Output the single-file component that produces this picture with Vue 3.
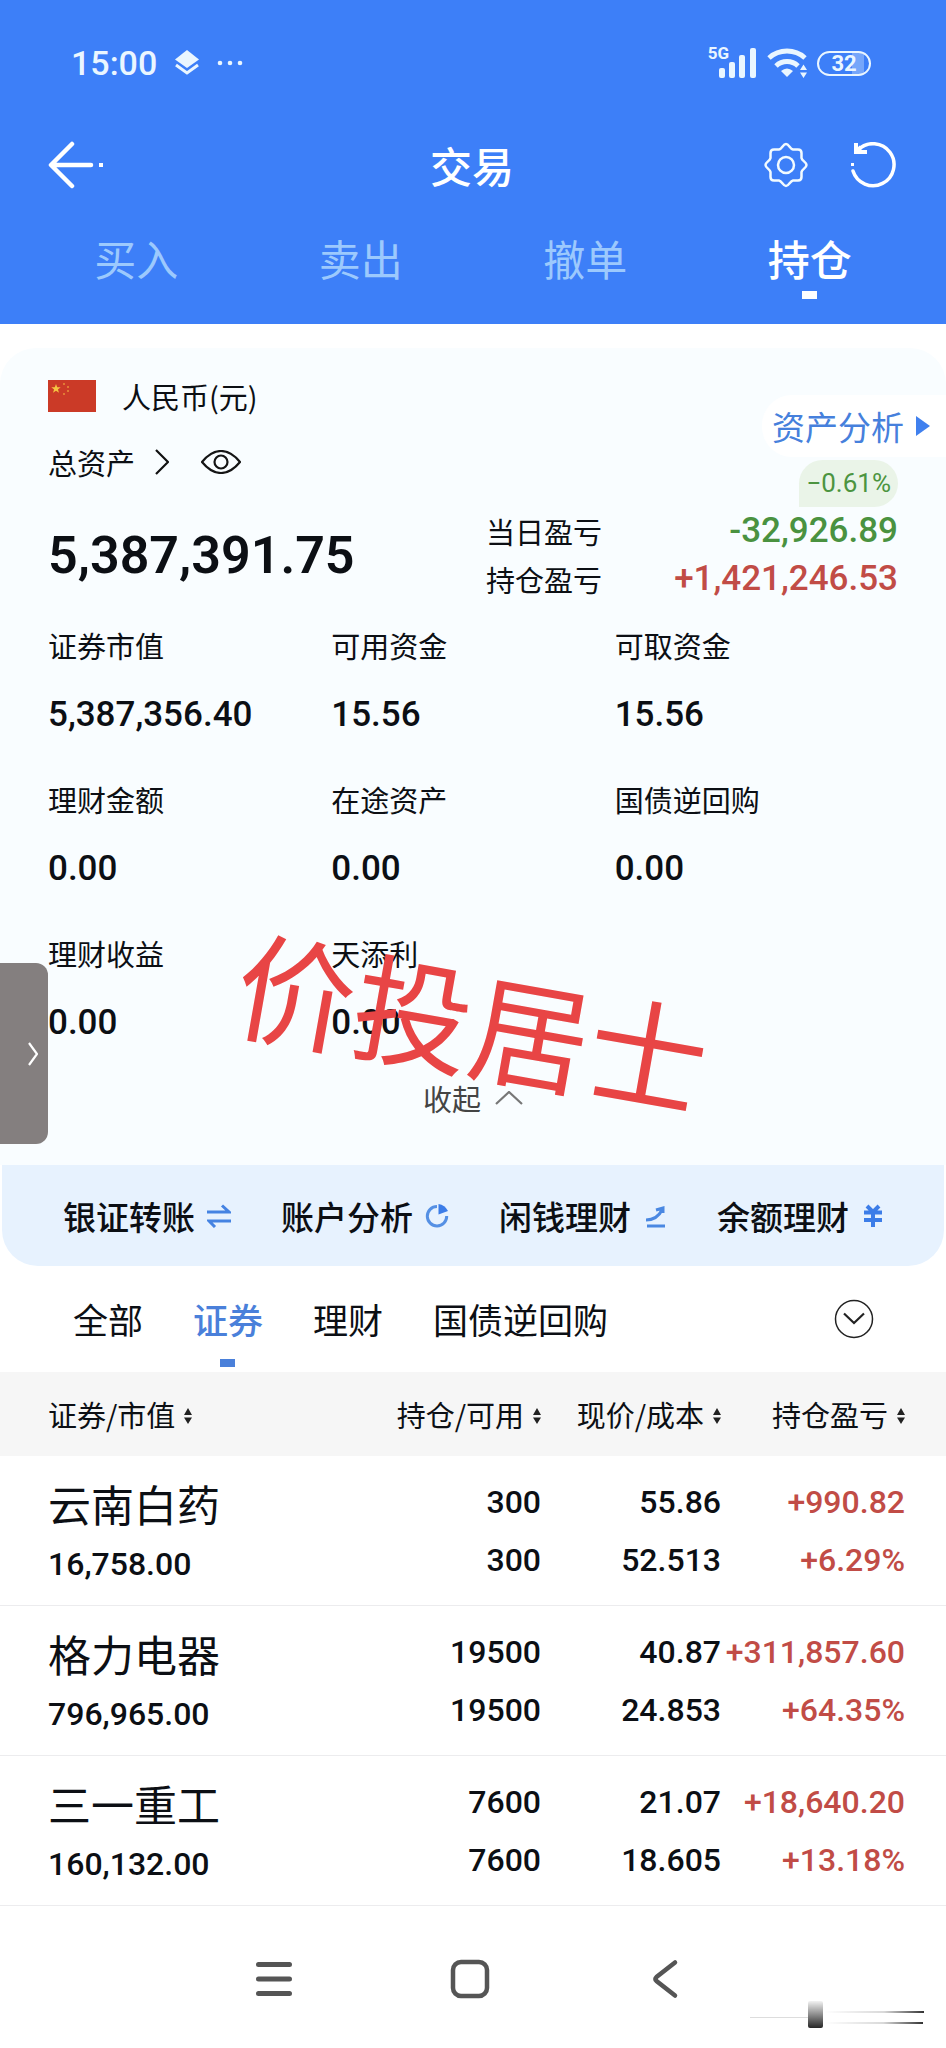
<template>
  <div class="page">
    <header class="header">
      <div class="status-bar">
        <div class="status-left">
          <span class="clock">15:00</span>
          <svg class="layers-icon" viewBox="0 0 24 26">
            <path d="M12 0 L24 9.5 L12 18 L0 9.5 Z" fill="#eaf6ff" />
            <path d="M1 15 L12 23 L23 15" fill="none" stroke="#eaf6ff" stroke-width="3" />
          </svg>
          <svg class="dots-icon" viewBox="0 0 26 6">
            <circle cx="3" cy="3" r="2.3" fill="#eaf6ff" />
            <circle cx="13" cy="3" r="2.3" fill="#eaf6ff" />
            <circle cx="23" cy="3" r="2.3" fill="#eaf6ff" />
          </svg>
        </div>
        <div class="status-right">
          <span class="network">5G</span>
          <svg class="signal-icon" viewBox="0 0 38 30" fill="#eaf6ff">
            <rect x="0" y="20" width="6" height="10" rx="2" />
            <rect x="10" y="14" width="6" height="16" rx="2" />
            <rect x="20" y="7" width="6" height="23" rx="2" />
            <rect x="31" y="0" width="6" height="30" rx="2" />
          </svg>
          <svg class="wifi-icon" viewBox="0 0 42 30">
            <g fill="none" stroke="#eaf6ff" stroke-width="5">
              <path d="M2 10 A27 27 0 0 1 38 10" />
              <path d="M9 18 A16 16 0 0 1 31 18" />
            </g>
            <path d="M14 23 Q20 18 26 23 L20 29 Z" fill="#eaf6ff" />
            <path d="M33 22 L36.500 16.500 L40 22 Z M33 24.500 L36.500 30 L40 24.500 Z" fill="#eaf6ff" />
          </svg>
          <span class="battery">32</span>
        </div>
      </div>

      <div class="nav-bar">
        <button class="icon-btn back" aria-label="返回">
          <svg width="56" height="48" viewBox="0 0 56 48">
            <path d="M24 3 L3 24 L24 45 M4 24 H43" fill="none" stroke="#fff" stroke-width="4.500" stroke-linecap="round" stroke-linejoin="round" />
            <rect x="51" y="22" width="4" height="4" fill="#fff" />
          </svg>
        </button>
        <h1 class="title">交易</h1>
        <div class="nav-actions">
          <button class="icon-btn" aria-label="设置">
            <svg width="44" height="46" viewBox="0 0 44 46" fill="none" stroke="#f2fbff" stroke-width="2.500" stroke-linejoin="round">
              <path d="M22 2 C25 2 26 7 29 7.500 H34 Q37.500 7.500 37.500 11 V16 C38 19 42.500 20 42.500 23 C42.500 26 38 27 37.500 30 V35 Q37.500 38.500 34 38.500 H29 C26 39 25 44 22 44 C19 44 18 39 15 38.500 H10 Q6.500 38.500 6.500 35 V30 C6 27 1.500 26 1.500 23 C1.500 20 6 19 6.500 16 V11 Q6.500 7.500 10 7.500 H15 C18 7 19 2 22 2 Z" />
              <circle cx="22" cy="23" r="8" />
            </svg>
          </button>
          <button class="icon-btn" aria-label="刷新">
            <svg width="46" height="46" viewBox="0 0 46 46" fill="none" stroke="#fff" stroke-width="3.500">
              <path d="M8 8 A21 21 0 1 1 3 29" stroke-linecap="round" />
              <path d="M6 1 V10 H17 M6 10 L11 5" stroke-width="4" />
              <rect x="1" y="21" width="3" height="3" fill="#fff" stroke="none" />
            </svg>
          </button>
        </div>
      </div>

      <nav class="main-tabs">
        <button
          v-for="tab in mainTabs"
          :key="tab"
          class="main-tab"
          :class="{ active: tab === activeMain }"
          @click="activeMain = tab"
        >{{ tab }}</button>
      </nav>
    </header>

    <section class="panel">
      <div class="currency">
        <svg class="flag" viewBox="0 0 48 32">
          <rect width="48" height="32" fill="#cb3a27" />
          <path d="M8 4 L9.200 7.300 L12.700 7.300 L9.900 9.400 L11 12.800 L8 10.700 L5 12.800 L6.100 9.400 L3.300 7.300 L6.800 7.300 Z" fill="#f5c542" />
          <g fill="#e8913a">
            <circle cx="16" cy="4" r="1" />
            <circle cx="20" cy="7" r="1" />
            <circle cx="20" cy="11" r="1" />
            <circle cx="16" cy="14" r="1" />
          </g>
        </svg>
        <span>人民币(元)</span>
      </div>

      <a class="analysis" href="#">
        资产分析
        <svg width="14" height="20" viewBox="0 0 14 20"><path d="M0 0 L14 10 L0 20 Z" fill="#4080ee" /></svg>
      </a>

      <div class="overview">
        <div class="total">
          <div class="total-label">
            <span>总资产</span>
            <svg class="chevron" viewBox="0 0 14 26"><path d="M1 1 L13 13 L1 25" fill="none" stroke="#111" stroke-width="2.200" /></svg>
            <button class="icon-btn" aria-label="显示资产">
              <svg width="40" height="24" viewBox="0 0 40 24" fill="none" stroke="#151515" stroke-width="2.200">
                <path d="M1 12 Q10 1 20 1 Q30 1 39 12 Q30 23 20 23 Q10 23 1 12 Z" />
                <circle cx="20" cy="12" r="6.500" />
              </svg>
            </button>
          </div>
          <div class="total-value num">5,387,391.75</div>
        </div>
        <div class="profit">
          <span class="badge">−0.61%</span>
          <div class="profit-row">
            <span>当日盈亏</span>
            <span class="num green">-32,926.89</span>
          </div>
          <div class="profit-row">
            <span>持仓盈亏</span>
            <span class="num red">+1,421,246.53</span>
          </div>
        </div>
      </div>

      <dl class="stats">
        <div v-for="item in stats" :key="item.label" class="stat">
          <dt>{{ item.label }}</dt>
          <dd class="num">{{ item.value }}</dd>
        </div>
      </dl>

      <button class="collapse">
        收起
        <svg width="28" height="14" viewBox="0 0 28 14"><path d="M1 13 L14 1 L27 13" fill="none" stroke="#777" stroke-width="2.200" /></svg>
      </button>

      <button class="drawer" aria-label="展开">
        <svg width="10" height="24" viewBox="0 0 10 24"><path d="M1 1 L9 12 L1 23" fill="none" stroke="#fff" stroke-width="2.200" /></svg>
      </button>
      <div class="signature">价投居士</div>
    </section>

    <nav class="shortcuts">
      <a href="#">银证转账
        <svg width="24" height="24" viewBox="0 0 24 24" fill="none" stroke="#4583e2" stroke-width="3">
          <path d="M0 8 H22 L15 1.500 M24 17 H2 L8 23" />
        </svg>
      </a>
      <a href="#">账户分析
        <svg width="24" height="24" viewBox="0 0 24 24">
          <path d="M12 2.500 A9.700 9.700 0 1 0 21.700 12" fill="none" stroke="#5590e4" stroke-width="3" />
          <path d="M13.500 10.500 V0 Q20 1 23 7 Z" fill="#3c7de8" />
        </svg>
      </a>
      <a href="#">闲钱理财
        <svg width="24" height="24" viewBox="0 0 24 24" fill="none" stroke="#4a88e2" stroke-width="3">
          <path d="M3 16 Q14 16 19 6 M13 6 L20 4 L20 9 M4 22 H22" />
        </svg>
      </a>
      <a href="#">余额理财
        <svg width="24" height="24" viewBox="0 0 24 24" fill="none" stroke="#3c7de8" stroke-width="4">
          <path d="M6 2 L12 8 L18 2 M3 8.500 H21 M3 16 H21 M12 8 V23" />
        </svg>
      </a>
    </nav>

    <div class="sub-tabs">
      <button
        v-for="tab in subTabs"
        :key="tab"
        class="sub-tab"
        :class="{ active: tab === activeSub }"
        @click="activeSub = tab"
      >{{ tab }}</button>
      <button class="icon-btn more" aria-label="更多">
        <svg width="40" height="40" viewBox="0 0 40 40" fill="none" stroke="#222">
          <circle cx="20" cy="20" r="18.500" stroke-width="1.500" />
          <path d="M10 14.500 L20 24 L30 14.500" stroke-width="2.200" />
        </svg>
      </button>
    </div>

    <table class="holdings">
      <thead>
        <tr>
          <th v-for="col in columns" :key="col">
            {{ col }}<svg class="sort" viewBox="0 0 8 16"><path d="M0 7 L4 0 L8 7 Z M0 9.500 L4 16 L8 9.500 Z" fill="#222" /></svg>
          </th>
        </tr>
      </thead>
      <tbody>
        <tr v-for="row in holdings" :key="row.name">
          <td>
            <div class="stock">{{ row.name }}</div>
            <div class="market-value num">{{ row.value }}</div>
          </td>
          <td class="num">
            <div>{{ row.held }}</div>
            <div>{{ row.usable }}</div>
          </td>
          <td class="num">
            <div>{{ row.price }}</div>
            <div>{{ row.cost }}</div>
          </td>
          <td class="num red">
            <div>{{ row.profit }}</div>
            <div>{{ row.rate }}</div>
          </td>
        </tr>
      </tbody>
    </table>

    <footer class="system-nav">
      <button class="icon-btn" aria-label="菜单">
        <svg width="48" height="48" viewBox="0 0 48 48" stroke="#555" stroke-width="5" stroke-linecap="round">
          <path d="M8.500 9.500 H39.500 M8.500 24 H39.500 M8.500 38.500 H39.500" />
        </svg>
      </button>
      <button class="icon-btn" aria-label="主页">
        <svg width="48" height="48" viewBox="0 0 48 48">
          <rect x="7" y="7" width="34" height="34" rx="8" fill="none" stroke="#555" stroke-width="4.500" />
        </svg>
      </button>
      <button class="icon-btn" aria-label="后退">
        <svg width="48" height="48" viewBox="0 0 48 48">
          <path d="M33 7.500 L14.500 22 Q12.500 24 14.500 26 L33 40.500" fill="none" stroke="#555" stroke-width="4.500" stroke-linecap="round" />
        </svg>
      </button>
      <svg class="smudge" width="176" height="32" viewBox="0 0 176 32">
        <defs>
          <linearGradient id="fadeX"><stop offset="0" stop-color="#000" stop-opacity="0" /><stop offset="0.600" stop-color="#000" stop-opacity="0.15" /><stop offset="1" stop-color="#000" stop-opacity="0.8" /></linearGradient>
          <linearGradient id="fadeY" x2="0" y2="1"><stop offset="0" stop-color="#000" stop-opacity="0.05" /><stop offset="1" stop-color="#000" stop-opacity="0.85" /></linearGradient>
        </defs>
        <rect x="0" y="17" width="58" height="1" fill="#ddd" />
        <rect x="74" y="11" width="100" height="2" fill="url(#fadeX)" />
        <rect x="74" y="22" width="99" height="2" fill="url(#fadeX)" />
        <rect x="58" y="1" width="15" height="27" rx="2" fill="url(#fadeY)" />
      </svg>
    </footer>
  </div>
</template>

<script setup>
import { ref } from 'vue';

const mainTabs = ['买入', '卖出', '撤单', '持仓'];
const activeMain = ref('持仓');

const subTabs = ['全部', '证券', '理财', '国债逆回购'];
const activeSub = ref('证券');

const stats = [
  { label: '证券市值', value: '5,387,356.40' },
  { label: '可用资金', value: '15.56' },
  { label: '可取资金', value: '15.56' },
  { label: '理财金额', value: '0.00' },
  { label: '在途资产', value: '0.00' },
  { label: '国债逆回购', value: '0.00' },
  { label: '理财收益', value: '0.00' },
  { label: '天添利', value: '0.00' },
];

const columns = ['证券/市值', '持仓/可用', '现价/成本', '持仓盈亏'];

const holdings = [
  { name: '云南白药', value: '16,758.00', held: '300', usable: '300', price: '55.86', cost: '52.513', profit: '+990.82', rate: '+6.29%' },
  { name: '格力电器', value: '796,965.00', held: '19500', usable: '19500', price: '40.87', cost: '24.853', profit: '+311,857.60', rate: '+64.35%' },
  { name: '三一重工', value: '160,132.00', held: '7600', usable: '7600', price: '21.07', cost: '18.605', profit: '+18,640.20', rate: '+13.18%' },
];
</script>

<style>
body {
  margin: 0;
  background: #fff;
}
</style>

<style scoped>
.page {
  display: flex;
  flex-direction: column;
  min-height: 100vh;
  font-family: "Noto Sans CJK SC", sans-serif;
  font-size: 29px;
  line-height: 40px;
  color: #0c0f14;
  background: #fff;
}

svg {
  display: block;
  flex: none;
}

button {
  padding: 0;
  border: none;
  background: none;
  font: inherit;
  color: inherit;
  cursor: pointer;
}

a {
  color: inherit;
  text-decoration: none;
}

.num {
  font-family: Roboto, sans-serif;
  font-size: 35px;
  font-weight: 500;
}

.green {
  color: #4a9240;
}

.red {
  color: #c14c46;
}

/* Header */
.header {
  background: #3d7ff8;
  color: #fff;
}

.status-bar {
  display: flex;
  justify-content: space-between;
  align-items: center;
  height: 84px;
  padding: 42px 75px 0 71px;
  box-sizing: border-box;
  color: #eaf6ff;
}

.status-left,
.status-right {
  display: flex;
  align-items: center;
}

.clock {
  font-family: Roboto, sans-serif;
  font-size: 34px;
  font-weight: 500;
}

.layers-icon {
  width: 24px;
  height: 26px;
  margin-left: 18px;
}

.dots-icon {
  width: 26px;
  height: 6px;
  margin-left: 18px;
}

.network {
  align-self: flex-start;
  margin-right: -10px;
  font-family: Roboto, sans-serif;
  font-size: 17px;
  font-weight: 700;
  line-height: 10px;
}

.signal-icon {
  width: 38px;
  height: 30px;
}

.wifi-icon {
  width: 42px;
  height: 30px;
  margin-left: 10px;
}

.battery {
  width: 54px;
  height: 25px;
  margin-left: 8px;
  box-sizing: border-box;
  border: 2px solid #eaf6ff;
  border-radius: 13px;
  background: linear-gradient(90deg, transparent 66%, #76a6fa 66%, #76a6fa 90%, transparent 90%);
  font-family: Roboto, sans-serif;
  font-size: 22px;
  font-weight: 700;
  line-height: 22px;
  text-align: center;
}

.nav-bar {
  display: grid;
  grid-template-columns: 1fr auto 1fr;
  align-items: center;
  height: 142px;
  padding: 10px 50px 0 48px;
}

.back {
  justify-self: start;
}

.title {
  margin: 0;
  font-size: 42px;
  font-weight: 500;
  line-height: 60px;
}

.nav-actions {
  display: flex;
  justify-content: flex-end;
  gap: 42px;
}

.main-tabs {
  display: grid;
  grid-template-columns: repeat(4, 1fr);
  height: 88px;
  padding: 0 24px;
}

.main-tab {
  position: relative;
  padding-bottom: 44px;
  font-size: 42px;
  line-height: 44px;
  color: #9cc9fd;
}

.main-tab.active {
  font-weight: 500;
  color: #fff;
}

.main-tab.active::after,
.sub-tab.active::after {
  content: "";
  position: absolute;
  left: 50%;
  bottom: 25px;
  width: 15px;
  height: 8px;
  margin-left: -8px;
  background: currentColor;
}

/* Assets */
.panel {
  position: relative;
  margin-top: 24px;
  padding: 28px 48px 0;
  border-radius: 36px 36px 0 0;
  background: #f9fdff;
}

.currency {
  display: flex;
  align-items: center;
  gap: 26px;
}

.flag {
  width: 48px;
  height: 32px;
}

.analysis {
  position: absolute;
  top: 47px;
  right: 0;
  display: flex;
  align-items: center;
  gap: 12px;
  height: 62px;
  padding: 0 16px 0 10px;
  border-radius: 30px 0 0 30px;
  background: #fff;
  font-size: 33px;
  color: #4680dc;
}

.overview {
  display: flex;
  justify-content: space-between;
  height: 200px;
}

.total-label {
  display: flex;
  align-items: center;
  margin-top: 26px;
}

.chevron {
  width: 14px;
  height: 26px;
  margin: 0 32px 0 20px;
}

.total-value {
  margin-top: 44px;
  font-size: 52px;
  font-weight: 600;
  line-height: 60px;
}

.profit {
  display: flex;
  flex-direction: column;
  width: 412px;
  margin-top: 44px;
}

.badge {
  align-self: flex-end;
  padding: 0 7px;
  border-radius: 24px 24px 24px 0;
  background: #eaf4e8;
  font-family: Roboto, sans-serif;
  font-size: 26px;
  line-height: 47px;
  color: #4c9440;
}

.profit-row {
  display: flex;
  justify-content: space-between;
  line-height: 48px;
}

.stats {
  display: grid;
  grid-template-columns: repeat(3, 1fr);
  row-gap: 42px;
  margin: 0;
  padding-top: 8px;
}

.stat dt {
  line-height: 42px;
}

.stat dd {
  margin: 28px 0 0;
  line-height: 42px;
}

.collapse {
  display: flex;
  justify-content: center;
  align-items: center;
  gap: 14px;
  width: 100%;
  padding: 34px 0 47px;
  color: #444;
}

.drawer {
  position: absolute;
  left: 0;
  top: 615px;
  display: flex;
  justify-content: flex-end;
  align-items: center;
  width: 48px;
  height: 181px;
  padding-right: 10px;
  border-radius: 0 12px 12px 0;
  background: #847f7f;
}

.signature {
  position: absolute;
  top: 600px;
  left: 0;
  right: 0;
  font-size: 119px;
  line-height: 140px;
  text-align: center;
  color: #e84545;
  transform: rotate(10deg);
  pointer-events: none;
}

/* Shortcuts */
.shortcuts {
  display: grid;
  grid-template-columns: repeat(4, 1fr);
  align-items: center;
  height: 101px;
  margin: 0 2px;
  padding: 0 34px 0 36px;
  border-radius: 0 0 36px 36px;
  background: #e7f2fe;
  font-size: 33px;
  font-weight: 500;
}

.shortcuts a {
  display: flex;
  justify-content: center;
  align-items: center;
  gap: 12px;
}

.sub-tabs {
  display: flex;
  gap: 50px;
  height: 106px;
  padding: 0 72px 0 73px;
  font-size: 35px;
}

.sub-tab {
  position: relative;
}

.sub-tab.active {
  font-weight: 500;
  color: #4a80da;
}

.sub-tab.active::after {
  bottom: 5px;
}

.more {
  margin-left: auto;
}

/* Holdings */
.holdings {
  width: 100%;
  border-collapse: collapse;
  table-layout: fixed;
}

.holdings th {
  height: 84px;
  padding: 0;
  box-sizing: border-box;
  background: #f6f6f6;
  font-weight: 400;
  text-align: right;
}

.holdings th:nth-child(2) {
  width: 200px;
}

.holdings th:nth-child(3) {
  width: 180px;
}

.holdings th:nth-child(4) {
  width: 225px;
}

.holdings td {
  padding: 17px 0 10px;
  border-bottom: 1px solid #ececee;
  line-height: 58px;
  text-align: right;
  vertical-align: top;
}

.holdings td.num,
.market-value {
  font-size: 32px;
}

.holdings th:first-child,
.holdings td:first-child {
  padding-left: 48px;
  text-align: left;
}

.holdings th:last-child,
.holdings td:last-child {
  padding-right: 41px;
}

.stock {
  font-size: 43px;
  line-height: 60px;
}

.market-value {
  line-height: 62px;
}

.sort {
  display: inline-block;
  width: 8px;
  height: 16px;
  margin-left: 9px;
  vertical-align: 3px;
}

.system-nav {
  position: relative;
  display: flex;
  justify-content: center;
  align-items: center;
  flex: 1;
  gap: 148px;
  padding: 4px 6px 0 0;
}

.smudge {
  position: absolute;
  right: 20px;
  bottom: 16px;
}
</style>
